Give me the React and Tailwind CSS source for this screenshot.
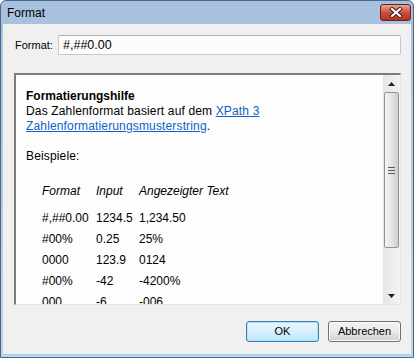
import React from 'react';

const rows = [
  ['#,##0.00', '1234.5', '1,234.50'],
  ['#00%', '0.25', '25%'],
  ['0000', '123.9', '0124'],
  ['#00%', '-42', '-4200%'],
  ['000', '-6', '-006'],
];

const CloseButton = () => (
  <div className="w-[31px] h-[17px] mt-[3px] mr-[2px] rounded-[3px] border border-[#6b2020] bg-gradient-to-b from-[#e8a493] via-[#c9503e] to-[#b5301f] flex items-center justify-center">
    <svg width="14" height="11" viewBox="0 0 14 11">
      <path d="M3 2 L11 9 M11 2 L3 9" stroke="#3b1a1a" strokeWidth="4" strokeLinecap="square" />
      <path d="M3 2 L11 9 M11 2 L3 9" stroke="#ffffff" strokeWidth="2.2" strokeLinecap="square" />
    </svg>
  </div>
);

const Scrollbar = () => (
  <div className="w-[17px] flex flex-col bg-gradient-to-r from-[#e6e6e6] to-[#f3f3f3]">
    <div className="h-[17px] flex items-center justify-center">
      <svg width="7" height="4" viewBox="0 0 7 4">
        <path d="M3.5 0 L7 4 L0 4 Z" fill="#202020" />
      </svg>
    </div>
    <div className="h-[156px] mx-[1px] rounded-[2px] border border-[#929292] bg-gradient-to-r from-[#f4f4f4] via-[#e4e4e4] to-[#cfcfcf] flex items-center justify-center">
      <div className="flex flex-col gap-[2px]">
        <div className="w-[7px] h-[1px] bg-[#5a5a5a]" />
        <div className="w-[7px] h-[1px] bg-[#5a5a5a]" />
        <div className="w-[7px] h-[1px] bg-[#5a5a5a]" />
      </div>
    </div>
    <div className="flex-1" />
    <div className="h-[17px] flex items-center justify-center">
      <svg width="7" height="4" viewBox="0 0 7 4">
        <path d="M0 0 L7 0 L3.5 4 Z" fill="#202020" />
      </svg>
    </div>
  </div>
);

const App = () => {
  return (
    <div className="w-[414px] h-[358px] bg-white font-['Liberation_Sans',Arial,sans-serif] text-black">
      <div className="w-full h-full flex flex-col rounded-t-[6px] border border-[#4b6887] bg-gradient-to-b from-[#a7c0dc] to-[#bfd4ea] overflow-hidden">
        {/* title bar */}
        <div className="h-[23px] flex items-start justify-between shrink-0">
          <span className="pl-[6px] pt-[5px] text-[12px] leading-[14px]">Format</span>
          <CloseButton />
        </div>

        {/* client area */}
        <div className="flex-1 mx-[2px] mb-[2px] bg-[#f0f0f0] flex flex-col border-b border-[#9fd0ee]">
          <div className="flex items-center pt-[11px] pl-[12px] pr-[10px]">
            <span className="w-[43px] text-[11px]">Format:</span>
            <div className="flex-1 h-[20px] rounded-[2px] border border-[#c5c9cf] border-t-[#abadb3] bg-[#fcfcfc] flex items-center pl-[4px] text-[12.5px]">
              #,##0.00
            </div>
          </div>

          {/* help panel */}
          <div className="mt-[18px] ml-[11px] mr-[10px] h-[232px] flex border-t-2 border-l-2 border-t-[#7c7c7c] border-l-[#7c7c7c] border-r border-b border-r-[#e6e6e6] border-b-[#e6e6e6] bg-[#fdfdfd] overflow-hidden">
            <div className="flex-1 pt-[14px] pl-[10px] text-[12px] leading-[15px] overflow-hidden">
              <div className="font-bold">Formatierungshilfe</div>
              <div className="tracking-[0.15px]">
                Das Zahlenformat basiert auf dem{' '}
                <span className="text-[#0b62c8] underline">XPath 3</span>
                <br />
                <span className="text-[#0b62c8] underline">Zahlenformatierungsmusterstring</span>.
              </div>
              <div className="h-[15px]" />
              <div className="tracking-[0.15px]">Beispiele:</div>
              <div className="mt-[17px] pl-[16px]">
                <div className="flex italic py-[3px]">
                  <span className="w-[54px]">Format</span>
                  <span className="w-[43px]">Input</span>
                  <span>Angezeigter Text</span>
                </div>
                <div className="h-[6px]" />
                {rows.map((r, i) => (
                  <div key={i} className="flex py-[3px]">
                    <span className="w-[54px]">{r[0]}</span>
                    <span className="w-[43px]">{r[1]}</span>
                    <span>{r[2]}</span>
                  </div>
                ))}
              </div>
            </div>
            <Scrollbar />
          </div>

          {/* buttons */}
          <div className="mt-[16px] flex justify-end gap-[9px] pr-[10px] text-[11px]">
            <button className="w-[73px] h-[21px] rounded-[3px] border border-[#3c7fb1] bg-gradient-to-b from-[#eaf6fd] via-[#d9f0fc] to-[#bee6fd] shadow-[inset_0_0_0_1px_#aee3f9]">
              OK
            </button>
            <button className="w-[73px] h-[21px] rounded-[3px] border border-[#707070] bg-gradient-to-b from-[#f2f2f2] via-[#ebebeb] to-[#cfcfcf] shadow-[inset_0_0_0_1px_#fcfcfc]">
              Abbrechen
            </button>
          </div>
        </div>
      </div>
    </div>
  );
};

export default App;
